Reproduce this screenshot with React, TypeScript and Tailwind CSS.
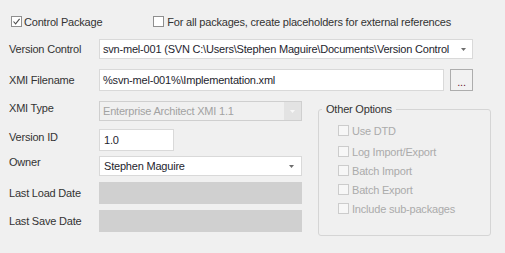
import React from "react";

const font = { fontFamily: '"Liberation Sans", Arial, sans-serif' };

function Arrow({ color = "#6d6d6d" }: { color?: string }) {
  return (
    <svg width="5" height="3" viewBox="0 0 5 3" className="shrink-0">
      <path d="M0 0 H5 L2.5 3 Z" fill={color} />
    </svg>
  );
}

function Check({ checked, disabled }: { checked?: boolean; disabled?: boolean }) {
  return (
    <div
      className={
        "flex h-[11px] w-[11px] shrink-0 items-center justify-center border " +
        (disabled ? "border-[#cccccc] bg-[#f7f7f7]" : "border-[#8f8f8f] bg-white")
      }
    >
      {checked && (
        <svg width="9" height="9" viewBox="0 0 9 9">
          <path d="M1.5 4.5 L3.6 6.8 L7.6 1.8" fill="none" stroke="#505050" strokeWidth="1.1" />
        </svg>
      )}
    </div>
  );
}

function Label({ children, className = "" }: { children: React.ReactNode; className?: string }) {
  return <div className={"w-[99px] shrink-0 pl-[9px] text-[#333333] " + className}>{children}</div>;
}

const options = [
  { t: "Use DTD", m: "mt-[9px]" },
  { t: "Log Import/Export", m: "mt-[10px]" },
  { t: "Batch Import", m: "mt-[8px]" },
  { t: "Batch Export", m: "mt-[8px]" },
  { t: "Include sub-packages", m: "mt-[8px]" },
];

export default function App() {
  return (
    <div
      className="flex h-[253px] w-[505px] flex-col overflow-hidden bg-[#f0f0f0] text-[11px] leading-[14px] tracking-[-0.2px]"
      style={font}
    >
      {/* top checkbox row */}
      <div className="mt-[16px] flex h-[11px] items-center">
        <div className="ml-[11px] flex items-center">
          <Check checked />
          <span className="ml-[2px] text-[#333333]">Control Package</span>
        </div>
        <div className="ml-[51px] flex items-center">
          <Check />
          <span className="ml-[3px] whitespace-nowrap text-[#333333]">
            For all packages, create placeholders for external references
          </span>
        </div>
      </div>

      {/* version control */}
      <div className="mt-[12px] flex h-[20px] items-center">
        <Label>Version Control</Label>
        <div className="flex h-[20px] w-[374px] items-center border border-[#d9d9d9] bg-white pl-[3px] pr-[6px]">
          <span className="flex-1 overflow-hidden whitespace-nowrap text-[#1e1e2e]">
            svn-mel-001 (SVN C:\Users\Stephen Maguire\Documents\Version Control
          </span>
          <Arrow />
        </div>
      </div>

      {/* XMI filename */}
      <div className="mt-[10px] flex h-[22px] items-center">
        <Label>XMI Filename</Label>
        <div className="flex h-[22px] w-[345px] items-center border border-[#d9d9d9] bg-white pl-[3px]">
          <span className="text-[#1e1e2e]">%svn-mel-001%\Implementation.xml</span>
        </div>
        <div className="ml-[6px] flex h-[22px] w-[23px] items-end justify-center border border-[#adadad] bg-[#f2f2f2] pb-[4px] text-[#6a2030]">
          <span className="leading-[8px]">...</span>
        </div>
      </div>

      <div className="flex">
        {/* left column */}
        <div className="flex w-[318px] shrink-0 flex-col">
          <div className="mt-[10px] flex h-[20px] items-center">
            <Label className="-mt-[6px]">XMI Type</Label>
            <div className="flex h-[20px] w-[203px] items-center border border-[#cfcfcf] bg-[#f0f0f0] pl-[3px]">
              <span className="flex-1 whitespace-nowrap text-[#a2a2a2]">Enterprise Architect XMI 1.1</span>
              <div className="flex h-[18px] w-[17px] items-center justify-center bg-[#e3e3e3]">
                <Arrow color="#f8f8f8" />
              </div>
            </div>
          </div>
          <div className="mt-[8px] flex h-[22px] items-center">
            <Label className="-mt-[6px]">Version ID</Label>
            <div className="flex h-[22px] w-[75px] items-center border border-[#d9d9d9] bg-white pl-[4px]">
              <span className="text-[#1e1e2e]">1.0</span>
            </div>
          </div>
          <div className="mt-[5px] flex h-[20px] items-center">
            <Label className="-mt-[8px]">Owner</Label>
            <div className="flex h-[20px] w-[203px] items-center border border-[#d9d9d9] bg-white pl-[4px] pr-[7px]">
              <span className="flex-1 text-[#1e1e2e]">Stephen Maguire</span>
              <Arrow />
            </div>
          </div>
          <div className="mt-[6px] flex h-[22px] items-center">
            <Label>Last Load Date</Label>
            <div className="h-[22px] w-[203px] bg-[#d0d0d0]" />
          </div>
          <div className="mt-[6px] flex h-[22px] items-center">
            <Label>Last Save Date</Label>
            <div className="h-[22px] w-[203px] bg-[#d0d0d0]" />
          </div>
        </div>

        {/* group */}
        <fieldset className="mt-[11px] h-[134px] w-[173px] shrink-0 rounded-[3px] border border-[#d5d5d5] px-0">
          <legend className="ml-[3px] px-[4px] text-[#333333]">Other Options</legend>
          <div className="flex flex-col pl-[19px]">
            {options.map((o) => (
              <div key={o.t} className={"flex h-[11px] items-center " + o.m}>
                <Check disabled />
                <span className="ml-[3px] whitespace-nowrap text-[#ababab]">{o.t}</span>
              </div>
            ))}
          </div>
        </fieldset>
      </div>
    </div>
  );
}
